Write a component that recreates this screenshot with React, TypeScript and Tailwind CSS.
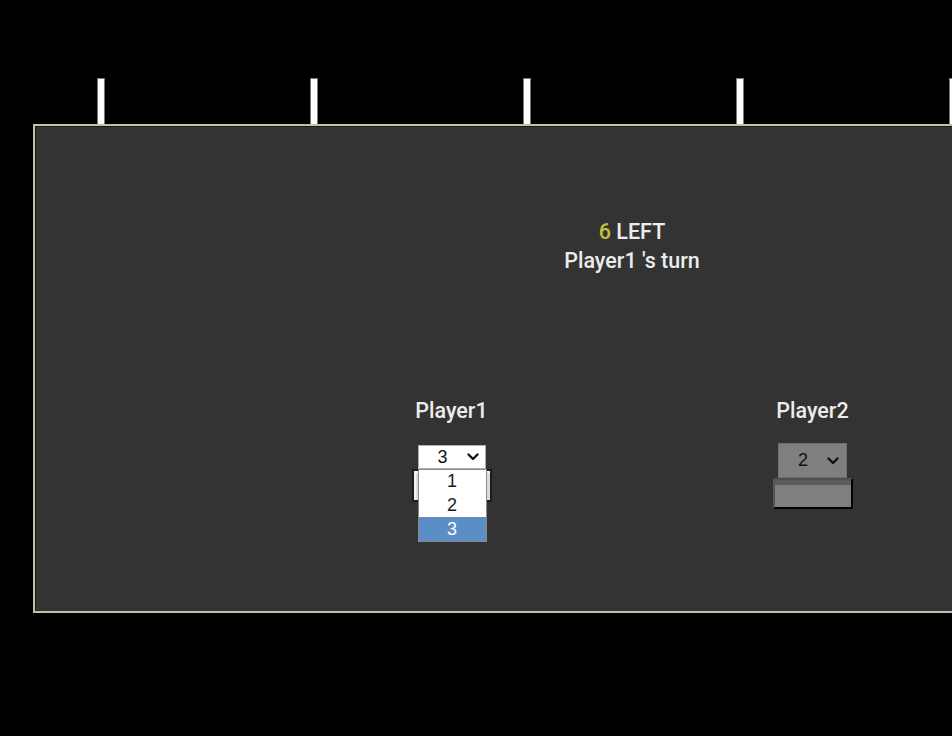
import React from "react";

const Chevron = ({ color = "#111" }: { color?: string }) => (
  <svg width="12" height="8" viewBox="0 0 12 8" fill="none">
    <path d="M1.5 1.5 L6 6 L10.5 1.5" stroke={color} strokeWidth="2.4" strokeLinecap="round" strokeLinejoin="round" />
  </svg>
);

export default function App() {
  const ticks = [0, 1, 2, 3, 4];
  return (
    <div
      className="w-[952px] h-[736px] overflow-hidden bg-black"
      style={{ fontFamily: "Roboto, 'Liberation Sans', sans-serif" }}
    >
      <div className="flex gap-[205px] ml-[97px] pt-[78px]">
        {ticks.map((t) => (
          <div key={t} className="w-[8px] h-[46px] shrink-0 bg-white border border-b-0 border-[#7a7a7a] rounded-t-[1px]" />
        ))}
      </div>
      <div className="ml-[33px] w-[1198px] h-[489px] border-2 border-[#c6beae] bg-[#333333] shadow-[inset_1px_1px_0_#1c1c1c]">
        <div className="pt-[91px] flex flex-col items-center text-[21.5px] leading-[29px] font-medium text-[#ececec]">
          <div>
            <span className="text-[#c3c03c]">6</span> LEFT
          </div>
          <div>Player1 's turn</div>
        </div>
        <div className="mt-[121px] flex justify-center items-start">
          <div className="w-[361px] flex flex-col items-center">
            <div className="text-[21.5px] leading-[29px] font-medium text-[#ececec]">Player1</div>
            <div className="relative mt-[20px] flex flex-col items-center">
              <div className="w-[68px] h-[24px] bg-white border border-[#b0b0b0] flex items-center justify-between pl-[19px] pr-[6px] text-[18px] text-[#111]" style={{ fontFamily: "'Liberation Sans', Arial, sans-serif" }}>
                <span>3</span>
                <Chevron />
              </div>
              <div className="w-[80px] h-[33px] border-2 border-[#1c1c1c] bg-[#dcdcdc] shadow-[inset_2px_2px_0_#f4f4f4]" />
              <div
                className="absolute left-[6px] top-[24px] w-[69px] bg-white border border-[#8a8a8a] flex flex-col text-[18px] text-[#1a1a1a]"
                style={{ fontFamily: "'Liberation Sans', Arial, sans-serif" }}
              >
                <div className="h-[23px] flex items-center justify-center">1</div>
                <div className="h-[24px] flex items-center justify-center">2</div>
                <div className="h-[24px] flex items-center justify-center bg-[#5b8ec6] text-white">3</div>
              </div>
            </div>
          </div>
          <div className="w-[361px] flex flex-col items-center">
            <div className="text-[21.5px] leading-[29px] font-medium text-[#ececec]">Player2</div>
            <div className="mt-[18px] flex flex-col items-center">
              <div className="w-[69px] h-[35px] bg-[#7f7f7f] border border-[#6e6e6e] flex items-center justify-between pl-[19px] pr-[7px] text-[18px] text-[#111]" style={{ fontFamily: "'Liberation Sans', Arial, sans-serif" }}>
                <span>2</span>
                <Chevron />
              </div>
              <div className="w-[80px] h-[31px] bg-[#7f7f7f] border-2 border-t-[#4e4e4e] border-l-[#555555] border-r-black border-b-black shadow-[inset_0_5px_0_#5c5c5c]" />
            </div>
          </div>
        </div>
      </div>
    </div>
  );
}
